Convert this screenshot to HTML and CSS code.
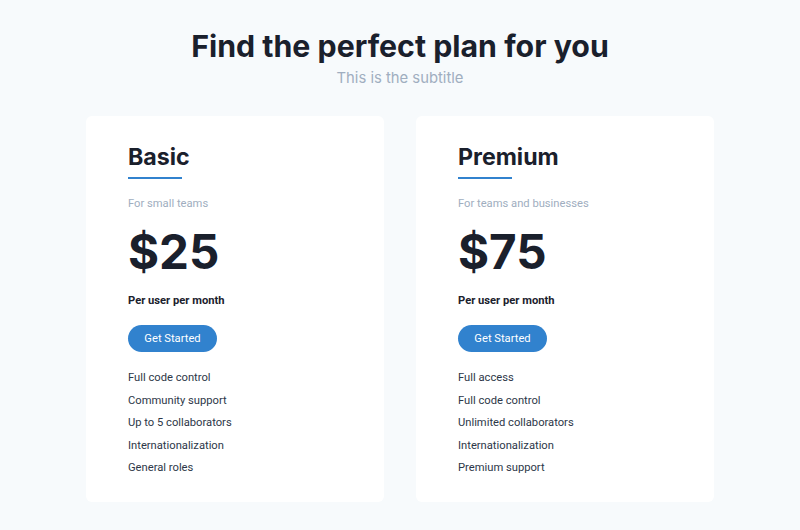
FILE: index.html
```html
<!DOCTYPE html>
<html>
<head>
<meta charset="utf-8">
<link rel="stylesheet" href="styles.css">
</head>
<body>
<main class="page">
  <header class="hero">
    <h1 class="title">Find the perfect plan for you</h1>
    <p class="subtitle">This is the subtitle</p>
  </header>
  <section class="plans">
    <article class="card">
      <h2 class="plan-name">Basic</h2>
      <p class="plan-desc">For small teams</p>
      <p class="price">$25</p>
      <p class="per">Per user per month</p>
      <button class="cta">Get Started</button>
      <ul class="features">
        <li>Full code control</li>
        <li>Community support</li>
        <li>Up to 5 collaborators</li>
        <li>Internationalization</li>
        <li>General roles</li>
      </ul>
    </article>
    <article class="card">
      <h2 class="plan-name">Premium</h2>
      <p class="plan-desc">For teams and businesses</p>
      <p class="price">$75</p>
      <p class="per">Per user per month</p>
      <button class="cta">Get Started</button>
      <ul class="features">
        <li>Full access</li>
        <li>Full code control</li>
        <li>Unlimited collaborators</li>
        <li>Internationalization</li>
        <li>Premium support</li>
      </ul>
    </article>
  </section>
</main>
</body>
</html>
```
FILE: styles.css
```css
* { box-sizing: border-box; }
html, body { margin: 0; padding: 0; }
body {
  background: #f7fafc;
  font-family: Roboto, "Liberation Sans", sans-serif;
  color: #1a202c;
  width: 800px;
  height: 530px;
  overflow: hidden;
}
.page {
  display: flex;
  flex-direction: column;
  align-items: center;
  padding-top: 28px;
}
.hero { text-align: center; }
.title {
  margin: 0;
  font-family: Inter, sans-serif;
  font-size: 30.3px;
  line-height: 36px;
  font-weight: 700;
  color: #1a202c;
}
.subtitle {
  margin: 4px 0 0;
  font-family: Inter, sans-serif;
  font-size: 14.8px;
  line-height: 20px;
  color: #a0aec0;
}
.plans {
  display: flex;
  gap: 32px;
  margin-top: 28px;
}
.card {
  width: 298px;
  height: 386px;
  background: #fff;
  border-radius: 6px;
  padding: 27px 42px 0;
}
.plan-name {
  margin: 0;
  font-family: Inter, sans-serif;
  font-size: 23.2px;
  line-height: 28px;
  font-weight: 700;
  color: #1a202c;
}
.plan-name::after {
  content: "";
  display: block;
  width: 54px;
  height: 2px;
  margin-top: 6px;
  background: #3182ce;
}
.plan-desc {
  margin: 17px 0 0;
  font-size: 11.2px;
  line-height: 16px;
  color: #a0aec0;
}
.price {
  margin: 12px 0 0;
  font-family: Inter, sans-serif;
  font-size: 47.5px;
  line-height: 56px;
  font-weight: 700;
  color: #1a202c;
}
.per {
  margin: 13px 0 0;
  font-size: 11.2px;
  line-height: 16px;
  font-weight: 700;
}
.cta {
  margin-top: 16px;
  display: block;
  width: 89px;
  height: 27px;
  padding: 0;
  border: none;
  border-radius: 14px;
  background: #3182ce;
  color: #fff;
  font-family: inherit;
  font-size: 11.2px;
}
.features {
  list-style: none;
  margin: 15px 0 0;
  padding: 0;
  font-size: 11.2px;
  color: #2d3748;
}
.features li {
  line-height: 22.5px;
}
```
